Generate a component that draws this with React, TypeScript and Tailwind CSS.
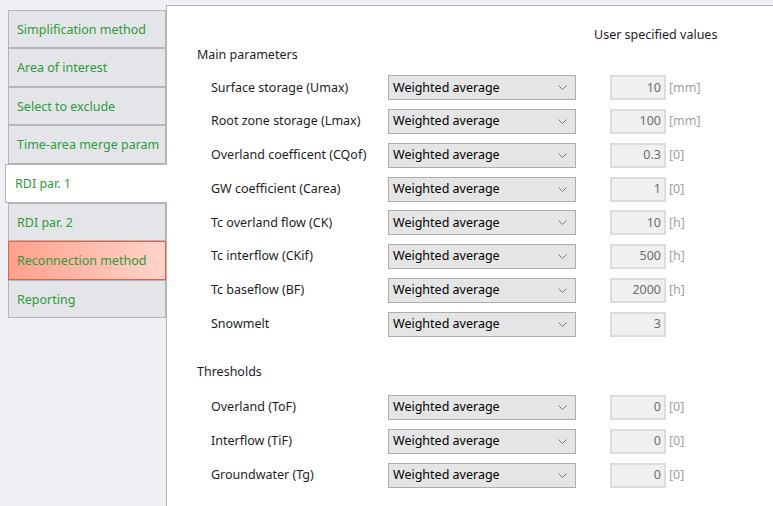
import React from "react";

const tabs: { label: string; h: number; kind?: "sel" | "warn" }[] = [
  { label: "Simplification method", h: 38 },
  { label: "Area of interest", h: 39 },
  { label: "Select to exclude", h: 38 },
  { label: "Time-area merge param", h: 39 },
  { label: "RDI par. 1", h: 39, kind: "sel" },
  { label: "RDI par. 2", h: 38 },
  { label: "Reconnection method", h: 39, kind: "warn" },
  { label: "Reporting", h: 38 },
];

const mainRows = [
  { label: "Surface storage (Umax)", value: "10", unit: "[mm]" },
  { label: "Root zone storage (Lmax)", value: "100", unit: "[mm]" },
  { label: "Overland coefficent (CQof)", value: "0.3", unit: "[0]" },
  { label: "GW coefficient (Carea)", value: "1", unit: "[0]" },
  { label: "Tc overland flow (CK)", value: "10", unit: "[h]" },
  { label: "Tc interflow (CKif)", value: "500", unit: "[h]" },
  { label: "Tc baseflow (BF)", value: "2000", unit: "[h]" },
  { label: "Snowmelt", value: "3", unit: "" },
];

const thrRows = [
  { label: "Overland (ToF)", value: "0", unit: "[0]" },
  { label: "Interflow (TiF)", value: "0", unit: "[0]" },
  { label: "Groundwater (Tg)", value: "0", unit: "[0]" },
];

function Chevron() {
  return (
    <svg width="9" height="5" viewBox="0 0 9 5" className="shrink-0">
      <path d="M0.5 0.5 L4.5 4.5 L8.5 0.5" fill="none" stroke="#7a7a7a" strokeWidth="1" />
    </svg>
  );
}

function Row({ label, value, unit, h }: { label: string; value: string; unit: string; h: string }) {
  return (
    <div className={`flex items-center ${h}`}>
      <div className="w-[191px] pl-[14px] text-[#1e1e1e] whitespace-nowrap">{label}</div>
      <div className="w-[188px] h-[25px] bg-[#e5e5e5] border border-[#adadad] flex items-center justify-between pl-[4px] pr-[8px] text-black">
        <span>Weighted average</span>
        <Chevron />
      </div>
      <div className="ml-[34px] w-[56px] h-[25px] bg-[#f0f0f0] border-2 border-[#dcdcdc] flex items-center justify-end pr-[3px] text-[#6d6d6d]">
        {value}
      </div>
      <div className="ml-[3px] text-[#a0a0a0]">{unit}</div>
    </div>
  );
}

export default function App() {
  return (
    <div
      className="w-[773px] h-[506px] bg-[#eef0f3] flex overflow-hidden text-[12.5px]"
      style={{ fontFamily: '"Noto Sans", "DejaVu Sans", sans-serif' }}
    >
      <div className="w-[166px] pt-[10px] flex flex-col shrink-0">
        {tabs.map((t) => {
          if (t.kind === "sel") {
            return (
              <div
                key={t.label}
                style={{ height: t.h }}
                className="relative z-10 ml-[5px] w-[162px] bg-white border border-[#b4b4bc] border-r-0 flex items-center pl-[9px] pt-[2px] text-[#2f9a3c] whitespace-nowrap"
              >
                {t.label}
              </div>
            );
          }
          const warn = t.kind === "warn";
          return (
            <div
              key={t.label}
              style={{ height: t.h }}
              className={`ml-[8px] w-[158px] border flex items-center pl-[8px] pt-[2px] whitespace-nowrap text-[#2f9a3c] ${
                warn
                  ? "border-[#e8603c] bg-gradient-to-r from-[#ffa08c] to-[#ffd4cc]"
                  : "border-[#b4b4bc] bg-[#e4e5e9]"
              }`}
            >
              {t.label}
            </div>
          );
        })}
      </div>
      <div className="flex-1 mt-[5px] bg-white border-l border-t border-[#b4b4bc] pl-[30px] pt-[18px]">
        <div className="h-[22px] flex items-center pl-[397px] text-[#1e1e1e]">User specified values</div>
        <div className="h-[18px] flex items-center text-[#1e1e1e]">Main parameters</div>
        <div className="mt-[7px]">
          {mainRows.map((r) => (
            <Row key={r.label} {...r} h="h-[33.75px]" />
          ))}
        </div>
        <div className="mt-[22px] h-[18px] flex items-center text-[#1e1e1e]">Thresholds</div>
        <div className="mt-[9px]">
          {thrRows.map((r) => (
            <Row key={r.label} {...r} h="h-[34px]" />
          ))}
        </div>
      </div>
    </div>
  );
}
